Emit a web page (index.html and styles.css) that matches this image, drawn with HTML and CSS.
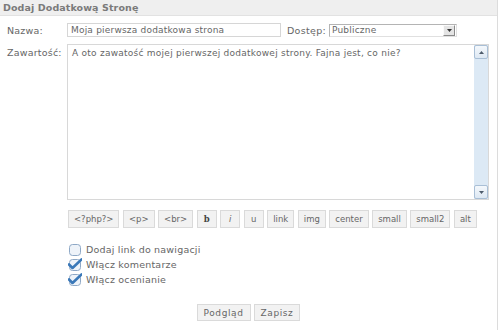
FILE: index.html
```html
<!DOCTYPE html>
<html lang="pl">
<head>
    <meta charset="UTF-8">
    <title>Dodaj Dodatkową Stronę</title>
    <link rel="stylesheet" href="styles.css">
</head>
<body>

    <div class="panel">
        <div class="panel-head">Dodaj Dodatkową Stronę</div>

        <div class="panel-body">
            <!-- name + access -->
            <div class="row">
                <label class="lbl" for="pageName">Nazwa:</label>
                <input type="text" id="pageName" class="txt" value="Moja pierwsza dodatkowa strona">
                <label class="lbl-inline">Dostęp:</label>
                <div class="select">
                    <span>Publiczne</span>
                    <span class="select-btn">
                        <svg width="5" height="3" viewBox="0 0 5 3"><path d="M0 0h5L2.5 3z" fill="#333"/></svg>
                    </span>
                </div>
            </div>

            <!-- content -->
            <div class="row row-top">
                <label class="lbl">Zawartość:</label>
                <div class="area">
                    <div class="area-text">A oto zawatość mojej pierwszej dodatkowej strony. Fajna jest, co nie?</div>
                    <div class="scroll">
                        <span class="scroll-btn">
                            <svg width="5" height="3" viewBox="0 0 5 3"><path d="M0 3h5L2.5 0z" fill="#4d5b6b"/></svg>
                        </span>
                        <span class="scroll-btn">
                            <svg width="5" height="3" viewBox="0 0 5 3"><path d="M0 0h5L2.5 3z" fill="#4d5b6b"/></svg>
                        </span>
                    </div>
                </div>
            </div>

            <!-- tag buttons -->
            <div class="tags">
                <button>&lt;?php?&gt;</button>
                <button>&lt;p&gt;</button>
                <button>&lt;br&gt;</button>
                <button class="tag-b">b</button>
                <button class="tag-i">i</button>
                <button class="tag-u">u</button>
                <button>link</button>
                <button>img</button>
                <button>center</button>
                <button>small</button>
                <button>small2</button>
                <button>alt</button>
            </div>

            <!-- options -->
            <div class="checks">
                <div class="check">
                    <svg width="14" height="14" viewBox="0 0 14 14">
                        <rect x="1.5" y="1.5" width="11" height="11" rx="3" fill="#eef3f9" stroke="#8ea8c6"/>
                    </svg>
                    <span>Dodaj link do nawigacji</span>
                </div>
                <div class="check">
                    <svg width="14" height="14" viewBox="0 0 14 14">
                        <rect x="1.5" y="1.5" width="11" height="11" rx="3" fill="#eef3f9" stroke="#8ea8c6"/>
                        <path d="M1 6.5l3.5 3.5L13.5 1.5" fill="none" stroke="#3a78b8" stroke-width="2.6" stroke-linecap="round" stroke-linejoin="round"/>
                    </svg>
                    <span>Włącz komentarze</span>
                </div>
                <div class="check">
                    <svg width="14" height="14" viewBox="0 0 14 14">
                        <rect x="1.5" y="1.5" width="11" height="11" rx="3" fill="#eef3f9" stroke="#8ea8c6"/>
                        <path d="M1 6.5l3.5 3.5L13.5 1.5" fill="none" stroke="#3a78b8" stroke-width="2.6" stroke-linecap="round" stroke-linejoin="round"/>
                    </svg>
                    <span>Włącz ocenianie</span>
                </div>
            </div>

            <div class="actions">
                <button>Podgląd</button>
                <button>Zapisz</button>
            </div>
        </div>
    </div>

</body>
</html>
```

FILE: styles.css
```css
/* Basic Reset */
* {
    margin: 0;
    padding: 0;
    box-sizing: border-box;
}

body {
    font-family: "DejaVu Sans", Verdana, sans-serif;
    font-size: 9.5px;
    color: #666;
    background-color: #ffffff;
}

.panel {
    width: 498px;
    height: 330px;
    border-right: 1px solid #dcdcdc;
}

.panel-head {
    height: 16px;
    padding: 2px 0 0 3px;
    background-color: #efefef;
    border-bottom: 1px solid #e2e2e2;
    color: #7a7a7a;
    font-weight: bold;
    letter-spacing: 0.1px;
}

.panel-body {
    padding: 7px 0 0 7px;
}

.row {
    display: flex;
    align-items: center;
    margin-bottom: 7px;
}

.row-top {
    align-items: flex-start;
}

.lbl {
    width: 60px;
    letter-spacing: 0.2px;
}

.row-top .lbl {
    padding-top: 3px;
}

.txt {
    width: 214px;
    height: 14px;
    padding: 0 3px;
    font-family: inherit;
    font-size: 9px;
    letter-spacing: 0.2px;
    color: #666;
    border: 1px solid #d6d6d6;
    outline: none;
}

.lbl-inline {
    margin-left: 6px;
    width: 42px;
    letter-spacing: 0.3px;
}

.select {
    display: flex;
    align-items: center;
    justify-content: space-between;
    width: 128px;
    height: 13px;
    padding-left: 2px;
    font-size: 9px;
    letter-spacing: 0.2px;
    border: 1px solid #b4b4b4;
    border-right-color: #e0e0e0;
    border-bottom-color: #e0e0e0;
}

.select-btn {
    display: flex;
    align-items: center;
    justify-content: center;
    width: 12px;
    height: 11px;
    margin-right: 1px;
    background-color: #e4e4e4;
    border: 1px solid #fafafa;
    border-right-color: #8a8a8a;
    border-bottom-color: #8a8a8a;
}

.area {
    display: flex;
    width: 422px;
    height: 156px;
    border: 1px solid #d8d8d8;
}

.area-text {
    flex: 1;
    padding: 3px 4px;
    font-size: 9px;
    letter-spacing: 0.25px;
}

.scroll {
    display: flex;
    flex-direction: column;
    justify-content: space-between;
    width: 14px;
    background-color: #dce9f5;
}

.scroll-btn {
    display: flex;
    align-items: center;
    justify-content: center;
    height: 14px;
    background: linear-gradient(#f4f8fc, #dde8f3);
    border: 1px solid #a9bfd6;
    border-radius: 2px;
}

.tags {
    display: flex;
    gap: 3.5px;
    margin: 10px 0 0 61px;
}

.tags button,
.actions button {
    height: 18px;
    padding: 0 5px;
    font-family: inherit;
    font-size: 8.5px;
    color: #666;
    background-color: #f2f2f2;
    border: 1px solid #dadada;
}

.tags .tag-b {
    width: 20px;
    font-weight: bold;
    font-family: "DejaVu Serif", serif;
    color: #444;
}

.tags .tag-i,
.tags .tag-u {
    width: 20px;
}

.tags .tag-i {
    font-style: italic;
}

.checks {
    margin: 14px 0 0 61px;
}

.check {
    display: flex;
    align-items: center;
    gap: 4px;
    height: 15px;
    letter-spacing: 0.2px;
}

.check svg {
    flex: none;
}

.actions {
    display: flex;
    justify-content: center;
    gap: 3px;
    margin-top: 17px;
    padding-right: 7px;
}

.actions button {
    height: 17px;
    padding: 0 6px;
    font-size: 9px;
    letter-spacing: 0.6px;
}
```
